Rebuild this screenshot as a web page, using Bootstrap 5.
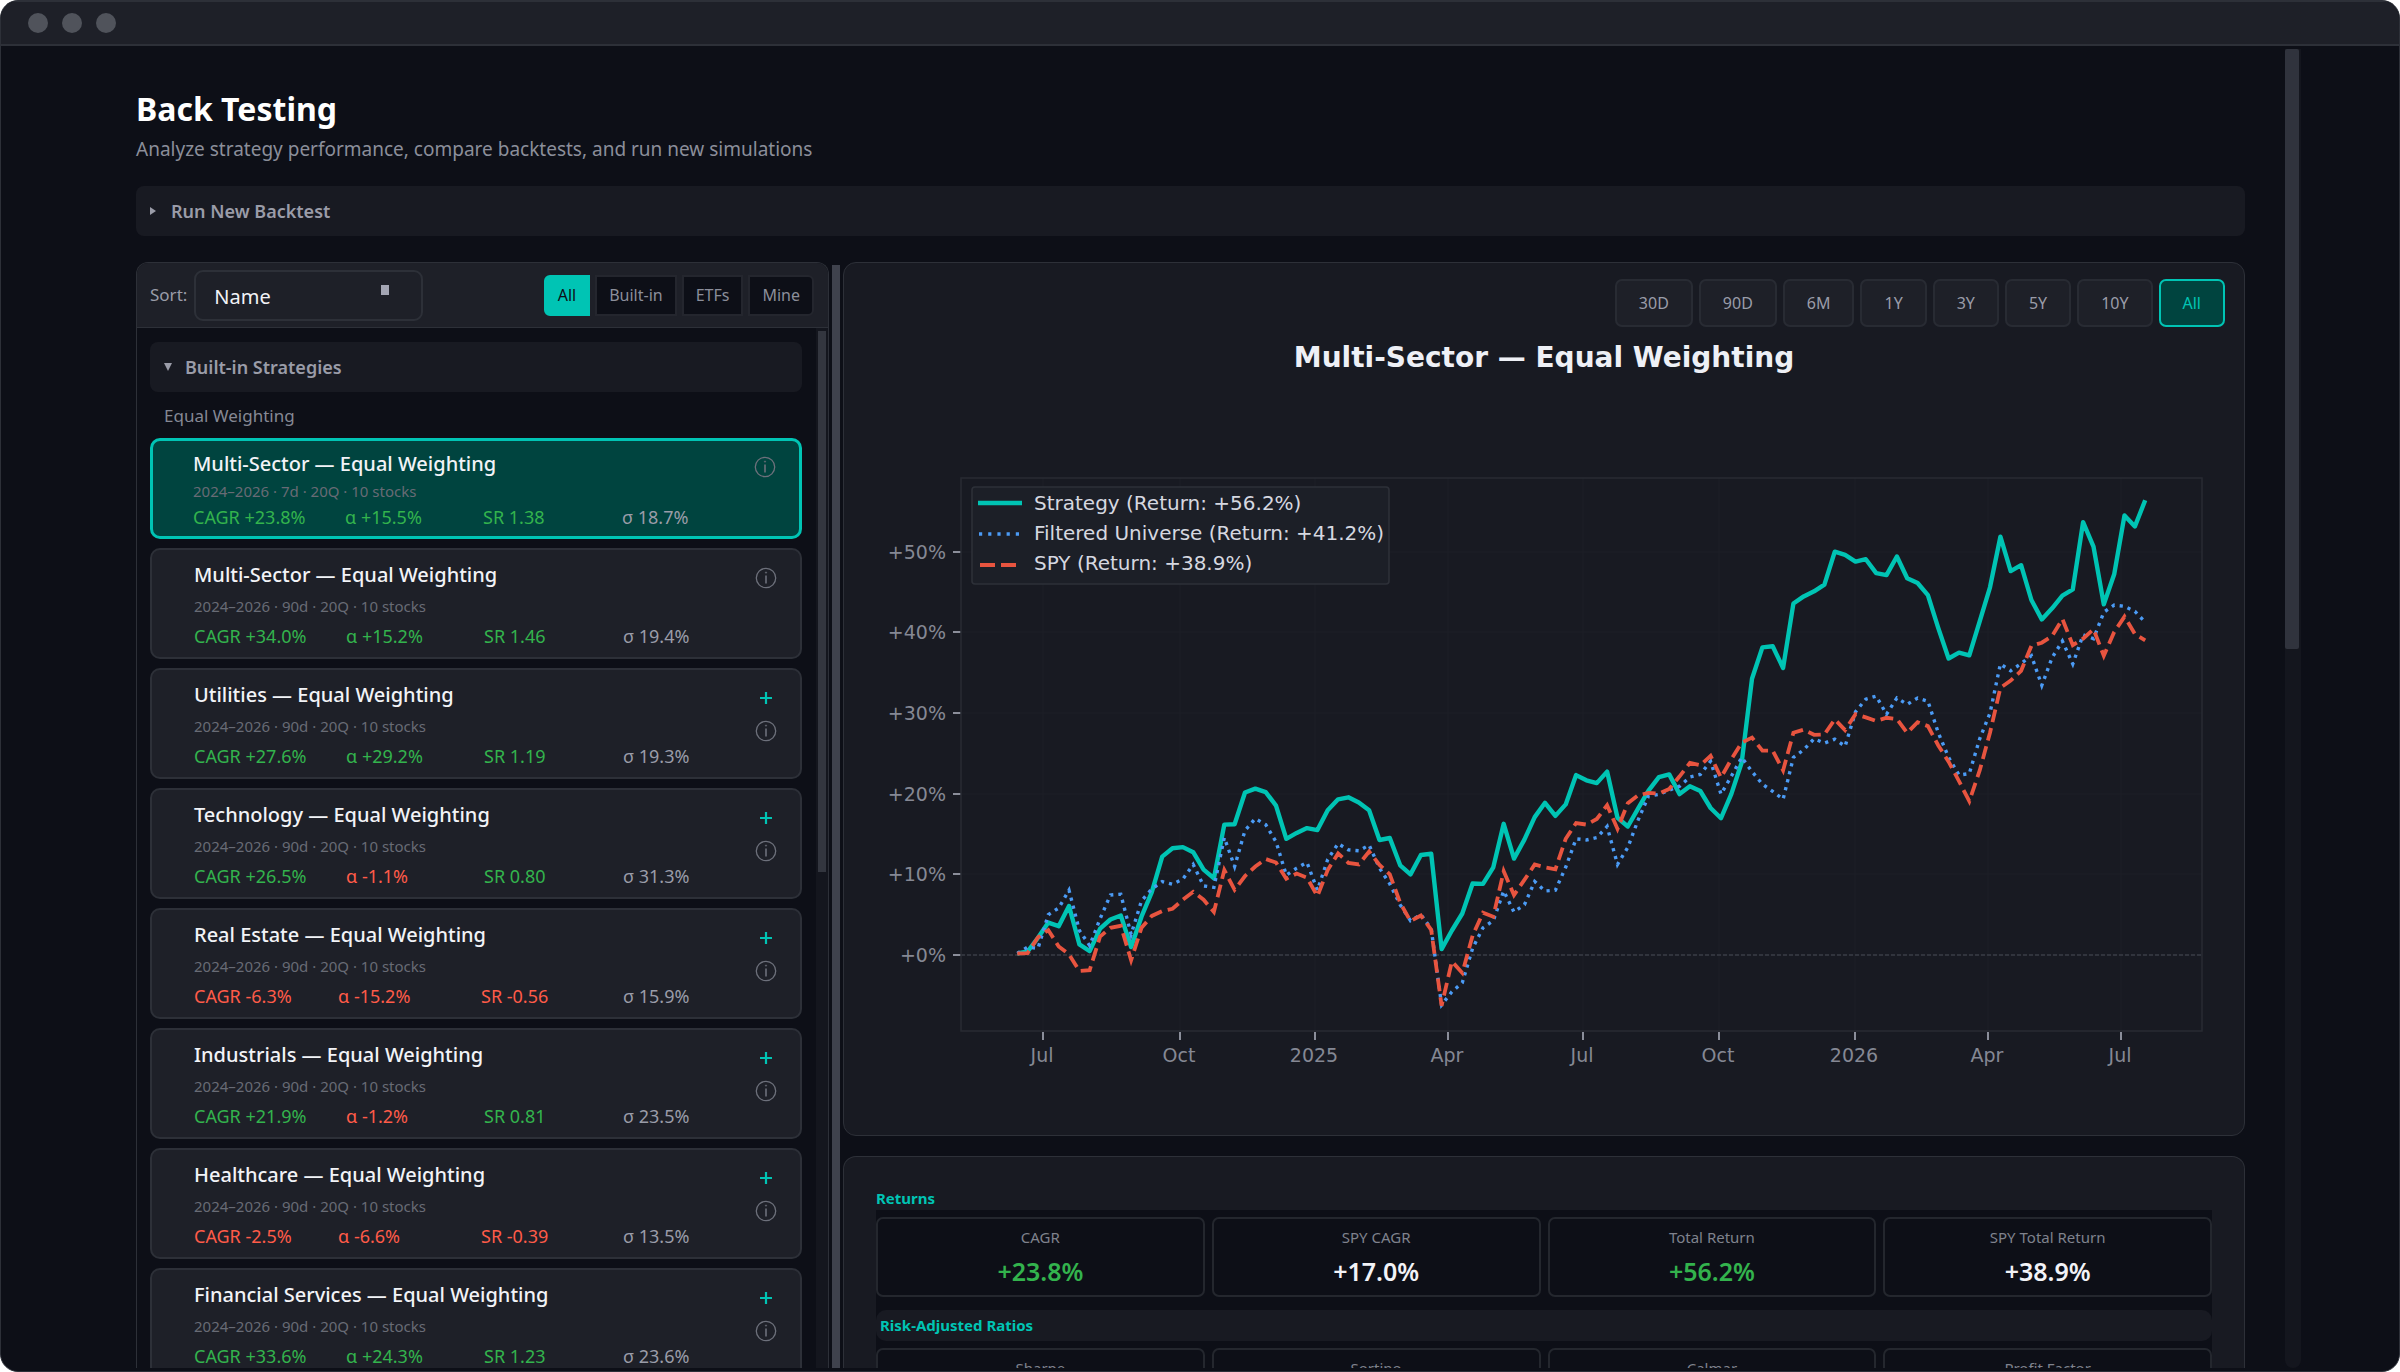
<!DOCTYPE html>
<html lang="en" data-bs-theme="dark">
<head>
<meta charset="utf-8">
<meta name="viewport" content="width=device-width, initial-scale=1">
<title>Back Testing</title>
<link rel="stylesheet" href="https://cdn.jsdelivr.net/npm/bootstrap@5.3.0/dist/css/bootstrap.min.css">
<style>
  :root {
    --ink: #0d0f17; --surface: #181a22; --raised: #1e2028; --line: #2d3038;
    --teal: #00c4b4; --teal-deep: #00443f; --muted: #9a9ca8; --dim: #686b75;
    --gain: #33b34d; --loss: #ff5b48;
  }
  html { background: #fff; }
  body { background: #fff; font-family: "Noto Sans", "Open Sans", sans-serif; color: #f2f3f7; }
  button { font-family: inherit; }
  .app-window { background: var(--ink); border-radius: 18px; border: 1px solid var(--line); }
  .title-bar { height: 45px; flex: none; background: var(--raised); border-top: 1px solid var(--line); border-bottom: 2px solid var(--line); gap: 14px; padding-left: 27px; }
  .dot { width: 20px; height: 20px; border-radius: 50%; background: #50535b; }
  .page-area { padding: 41px 40px 0 135px; min-width: 0; }
  .page-title { font-size: 32px; font-weight: 700; line-height: 44px; margin: 0; }
  .page-sub { font-size: 19px; line-height: 28px; margin: 4px 0 23px; color: #8b8e9a; }
  .fold { background: var(--surface); border: 0; border-radius: 8px; height: 50px; flex: none; color: var(--muted); font-size: 18px; font-weight: 600; text-align: left; gap: 12px; padding: 0 13px; }
  .fold svg { width: 10px; height: 10px; fill: var(--muted); }
  .split { margin-top: 26px; min-height: 0; gap: 3px; }
  .list-pane { flex: 691 1 0; min-width: 0; border: 1px solid var(--line); border-bottom: 0; border-radius: 12px 12px 0 0; overflow: hidden; }
  .detail-pane { flex: 1402 1 0; min-width: 0; gap: 20px; }
  .sash { width: 8px; flex: none; margin-top: 3px; background: #3f424d; }
  .pane-head { background: var(--raised); height: 65px; flex: none; border-bottom: 1px solid var(--line); padding: 0 14px 0 13px; }
  .pane-head label { font-size: 17px; color: var(--muted); margin-right: 7px; }
  .sort-box { width: 229px; height: 51px; position: relative; }
  .sort-box select { appearance: none; width: 100%; height: 100%; background: var(--raised); color: #f2f3f7; border: 2px solid var(--line); border-radius: 9px; font-size: 20px; padding: 3px 18px 0; }
  .sort-box::after { content: ""; position: absolute; right: 34px; top: 15px; width: 8px; height: 10px; background: #a3a5b3; }
  .filters { gap: 5px; margin-left: auto; }
  .filters button { height: 41px; background: var(--ink); border: 2px solid #24262e; color: #8b8e9a; font-size: 16px; padding: 0 12px; }
  .filters button:first-child { border-radius: 6px 0 0 6px; }
  .filters button:last-child { border-radius: 0 6px 6px 0; }
  .filters button.active { background: var(--teal); border-color: var(--teal); color: #0d0f17; }
  .pane-body { min-height: 0; overflow: hidden; padding: 14px 14px 0 13px; }
  .group-label { font-size: 17px; line-height: 24px; color: #858894; padding-left: 14px; margin: 12px 0 10px; }
  .strategies { gap: 9px; }
  .strategy { height: 111px; flex: none; background: var(--raised); border: 2px solid var(--line); border-radius: 10px; padding: 11px 0 0 42px; }
  .strategy.chosen { height: 101px; background: var(--teal-deep); border: 3px solid var(--teal); padding: 9px 0 0 40px; }
  .s-name { font-size: 20px; font-weight: 500; line-height: 28px; }
  .s-meta { font-size: 15px; line-height: 20px; margin: 7px 0; color: var(--dim); }
  .chosen .s-meta { margin: 3px 0; }
  .s-stats { font-size: 18px; line-height: 26px; display: grid; grid-template-columns: 152px 138px 139px 1fr; color: var(--gain); }
  .s-stats.narrow { grid-template-columns: 144px 143px 142px 1fr; }
  .s-stats .vol { color: var(--muted); }
  .s-stats .down { color: var(--loss); }
  .s-tools { width: 68px; flex: none; gap: 6px; padding-top: 3px; }
  .s-tools button { background: none; border: 0; padding: 0; width: 26px; height: 27px; display: flex; align-items: center; justify-content: center; }
  .s-tools svg { width: 22px; height: 22px; }
  .inner-bar { width: 12px; flex: none; background: #14161e; }
  .inner-bar div { width: 8px; height: 541px; margin: 3px auto 0; background: #33363f; }
  .panel { background: var(--surface); border: 1px solid var(--line); border-radius: 13px; }
  .ranges { gap: 6px; padding: 16px 19px 0; }
  .ranges button { height: 48px; background: var(--raised); border: 2px solid #282b33; border-radius: 7px; color: var(--muted); font-size: 16px; padding: 0 22px; }
  .ranges button.active { background: var(--teal-deep); border-color: var(--teal); color: var(--teal); }
  .chart-title { font-family: "DejaVu Sans", sans-serif; font-size: 28px; font-weight: 700; line-height: 40px; margin: 11px 0 0; text-align: center; color: #eef0f6; }
  .chart { display: block; width: 100%; font-family: "DejaVu Sans", sans-serif; }
  .chart .tick { font-size: 19px; fill: #858894; }
  .chart .leg { font-size: 20px; fill: #d6d8e0; }
  .metrics { border-bottom: 0; border-radius: 13px 13px 0 0; padding: 30px 32px 0; }
  .group-name { font-size: 15px; font-weight: 700; line-height: 23px; margin: 0; color: var(--teal); }
  .metric-block { background: var(--ink); }
  .metric-row { gap: 7px; padding: 7px 0 13px; }
  .metric-row > div { flex: 1 1 0; height: 80px; border: 2px solid #24272e; border-radius: 7px; text-align: center; padding-top: 7px; }
  .m-label { font-size: 15px; line-height: 22px; color: #7f828d; }
  .m-value { font-size: 25px; font-weight: 600; line-height: 34px; margin-top: 6px; }
  .group-strip { background: var(--surface); border-radius: 10px; height: 31px; padding: 4px; }
  .outer-bar { width: 16px; flex: none; margin: 3px 98px 0 0; background: #14161e; border-radius: 0 0 8px 8px; }
  .outer-bar div { width: 14px; height: 600px; background: #30333d; border-radius: 2px; }
  .bottom-edge { height: 3px; flex: none; }
</style>
</head>
<body>
<div class="app-window vh-100 d-flex flex-column overflow-hidden">
  <header class="title-bar d-flex align-items-center">
    <span class="dot"></span><span class="dot"></span><span class="dot"></span>
  </header>
  <div class="d-flex flex-grow-1 overflow-hidden">
    <main class="page-area flex-grow-1 d-flex flex-column">
      <h1 class="page-title">Back Testing</h1>
      <p class="page-sub">Analyze strategy performance, compare backtests, and run new simulations</p>
      <button class="fold d-flex align-items-center" type="button"><svg viewBox="0 0 10 10"><path d="M1 1l6 4-6 4z"/></svg>Run New Backtest</button>

      <div class="split d-flex flex-grow-1">
        <section class="list-pane d-flex flex-column">
          <div class="pane-head d-flex align-items-center">
            <label for="sort">Sort:</label>
            <div class="sort-box"><select id="sort"><option>Name</option><option>CAGR</option></select></div>
            <div class="filters d-flex">
              <button type="button" class="active">All</button><button type="button">Built-in</button><button type="button">ETFs</button><button type="button">Mine</button>
            </div>
          </div>
          <div class="d-flex flex-grow-1 overflow-hidden">
            <div class="pane-body flex-grow-1">
              <button class="fold d-flex align-items-center w-100" type="button"><svg viewBox="0 0 10 10"><path d="M1 1h8l-4 8z"/></svg>Built-in Strategies</button>
              <div class="group-label">Equal Weighting</div>
              <div class="strategies d-flex flex-column" id="strategies"></div>
            </div>
            <div class="inner-bar"><div></div></div>
          </div>
        </section>

        <div class="sash"></div>

        <div class="detail-pane d-flex flex-column">
          <section class="panel flex-shrink-0">
            <div class="ranges d-flex justify-content-end">
              <button type="button">30D</button><button type="button">90D</button><button type="button">6M</button><button type="button">1Y</button><button type="button">3Y</button><button type="button">5Y</button><button type="button">10Y</button><button type="button" class="active">All</button>
            </div>
            <h2 class="chart-title">Multi-Sector — Equal Weighting</h2>
            <svg class="chart" id="chart" viewBox="844 378 1400 757" role="img" aria-label="Strategy return chart"></svg>
          </section>
          <section class="panel metrics flex-shrink-0">
            <h3 class="group-name">Returns</h3>
            <div class="metric-block">
              <div class="metric-row d-flex">
                <div><div class="m-label">CAGR</div><div class="m-value" style="color:var(--gain)">+23.8%</div></div>
                <div><div class="m-label">SPY CAGR</div><div class="m-value">+17.0%</div></div>
                <div><div class="m-label">Total Return</div><div class="m-value" style="color:var(--gain)">+56.2%</div></div>
                <div><div class="m-label">SPY Total Return</div><div class="m-value">+38.9%</div></div>
              </div>
              <div class="group-strip"><h3 class="group-name">Risk-Adjusted Ratios</h3></div>
              <div class="metric-row d-flex">
                <div><div class="m-label">Sharpe</div></div>
                <div><div class="m-label">Sortino</div></div>
                <div><div class="m-label">Calmar</div></div>
                <div><div class="m-label">Profit Factor</div></div>
              </div>
            </div>
          </section>
        </div>
      </div>
    </main>
    <div class="outer-bar"><div></div></div>
  </div>
  <div class="bottom-edge"></div>
</div>

<script>
  // Strategy list: name, rebalance period, CAGR, alpha, Sharpe ratio, volatility
  const rows = [
    ['Multi-Sector', '7d', '+23.8%', '+15.5%', '1.38', '18.7%'],
    ['Multi-Sector', '90d', '+34.0%', '+15.2%', '1.46', '19.4%'],
    ['Utilities', '90d', '+27.6%', '+29.2%', '1.19', '19.3%'],
    ['Technology', '90d', '+26.5%', '-1.1%', '0.80', '31.3%'],
    ['Real Estate', '90d', '-6.3%', '-15.2%', '-0.56', '15.9%'],
    ['Industrials', '90d', '+21.9%', '-1.2%', '0.81', '23.5%'],
    ['Healthcare', '90d', '-2.5%', '-6.6%', '-0.39', '13.5%'],
    ['Financial Services', '90d', '+33.6%', '+24.3%', '1.23', '23.6%']
  ];
  const info = '<button type="button" aria-label="Details"><svg viewBox="0 0 22 22" fill="none" stroke="#6d707b"><circle cx="11" cy="11" r="9.7" stroke-width="1.3"/><path d="M11 8.500v8" stroke-width="1.6"/><circle cx="11" cy="5.600" r=".6" stroke-width="1"/></svg></button>';
  const add = '<button type="button" aria-label="Add"><svg viewBox="0 0 22 22" stroke="#00c4b4" stroke-width="2.2"><path d="M11 5v12M5 11h12"/></svg></button>';
  const tone = v => v[0] === '-' ? ' class="down"' : '';
  document.getElementById('strategies').innerHTML = rows.map((r, i) => `
    <article class="strategy d-flex${i === 0 ? ' chosen' : ''}">
      <div class="flex-grow-1">
        <div class="s-name">${r[0]} — Equal Weighting</div>
        <div class="s-meta">2024–2026 · ${r[1]} · 20Q · 10 stocks</div>
        <div class="s-stats${r[2][0] === '-' ? ' narrow' : ''}"><span${tone(r[2])}>CAGR ${r[2]}</span><span${tone(r[3])}>α ${r[3]}</span><span${tone(r[4])}>SR ${r[4]}</span><span class="vol">σ ${r[5]}</span></div>
      </div>
      <div class="s-tools d-flex flex-column align-items-center">${i > 1 ? add : ''}${info}</div>
    </article>`).join('');

  // Weekly levels, top-down; 1251 is the zero-return line
  const strategy = [1248,1243,1208,1170,1179,1128,1225,1242,1185,1162,1152,1232,1155,1093,1003,982,979,992,1036,1058,922,921,841,831,840,874,958,943,931,936,886,858,853,866,886,961,956,1025,1048,999,996,1237,1190,1147,1071,1072,1030,920,1008,960,903,867,900,871,797,810,817,788,905,927,881,836,802,795,845,825,837,880,906,845,765,553,474,471,526,363,345,332,315,232,240,257,251,286,291,244,299,311,342,425,502,487,494,408,322,194,281,266,354,403,375,343,327,157,219,365,289,140,168,102];
  const spy = [1248,1247,1207,1189,1230,1250,1292,1290,1205,1183,1178,1265,1183,1153,1141,1135,1112,1092,1112,1143,1037,1087,1052,1028,1009,1018,1059,1046,1056,1103,1037,995,1019,1023,990,1024,1048,1120,1166,1152,1188,1380,1268,1297,1203,1145,1155,1040,1100,1062,1023,1030,1035,958,918,922,908,873,933,868,848,842,844,832,800,766,772,748,803,757,715,702,735,735,785,690,682,695,694,656,683,643,651,660,652,655,690,663,673,722,763,812,863,785,690,576,558,533,470,462,445,402,468,452,428,495,435,396,440,456];
  const universe = [1248,1232,1235,1150,1133,1088,1190,1228,1160,1100,1098,1200,1115,1085,1066,1073,1060,1023,1077,1081,955,1028,937,907,922,965,1050,1032,1018,1088,1010,970,986,988,974,1032,1072,1125,1165,1150,1185,1378,1345,1322,1235,1183,1165,1090,1143,1125,1066,1090,1088,1030,958,961,955,927,1023,980,910,850,846,835,825,802,795,762,845,800,752,788,820,838,858,752,733,705,716,706,724,637,605,597,643,602,618,602,610,690,752,797,793,705,640,516,533,515,495,570,500,458,516,442,452,385,367,370,383,410];
  const line = a => a.map((v, i) => (1017.3 + 10.348 * i).toFixed(1) + ',' + (460 + v / 2.529).toFixed(1)).join(' ');
  const yt = [['+50%', 552], ['+40%', 632], ['+30%', 713], ['+20%', 794], ['+10%', 874], ['+0%', 955]];
  const xt = [['Jul', 1043], ['Oct', 1180], ['2025', 1315], ['Apr', 1448], ['Jul', 1583], ['Oct', 1719], ['2026', 1855], ['Apr', 1988], ['Jul', 2121]];
  let g = '';
  for (const [t, y] of yt) g += `<path d="M961 ${y}H2202" stroke="#1c1f26"/><path d="M953 ${y}h8" stroke="#8b8e9a" stroke-width="2"/><text class="tick" x="946" y="${y + 7}" text-anchor="end">${t}</text>`;
  for (const [t, x] of xt) g += `<path d="M${x} 478V1031" stroke="#1c1f26"/><path d="M${x} 1032v8" stroke="#8b8e9a" stroke-width="2"/><text class="tick" x="${x - 1}" y="1062" text-anchor="middle">${t}</text>`;
  g += '<path d="M961 955H2202" stroke="#3a3d46" stroke-width="1.4" stroke-dasharray="4 2"/><rect x="961" y="478" width="1241" height="553" fill="none" stroke="#282b33" stroke-width="1.5"/>';
  g += `<polyline points="${line(strategy)}" fill="none" stroke="#00c4b4" stroke-width="4.4" stroke-linejoin="round"/>`;
  g += `<polyline points="${line(universe)}" fill="none" stroke="#4b9bf5" stroke-width="3.4" stroke-dasharray="3.2 5"/>`;
  g += `<polyline points="${line(spy)}" fill="none" stroke="#e8543f" stroke-width="3.8" stroke-dasharray="13 6"/>`;
  g += '<rect x="972" y="487" width="417" height="97" rx="3" fill="#1c1f27" stroke="#2d3038" stroke-width="1.6"/>';
  g += '<path d="M978 503H1022" stroke="#00c4b4" stroke-width="4.4"/><path d="M979 534h42" stroke="#4b9bf5" stroke-width="3.4" stroke-dasharray="3.2 6"/><path d="M980 565h36" stroke="#e8543f" stroke-width="4" stroke-dasharray="15 6"/>';
  g += '<text class="leg" x="1034" y="510">Strategy (Return: +56.2%)</text><text class="leg" x="1034" y="540">Filtered Universe (Return: +41.2%)</text><text class="leg" x="1034" y="570">SPY (Return: +38.9%)</text>';
  document.getElementById('chart').innerHTML = g;
</script>
<script src="https://cdn.jsdelivr.net/npm/bootstrap@5.3.0/dist/js/bootstrap.bundle.min.js"></script>
</body>
</html>
